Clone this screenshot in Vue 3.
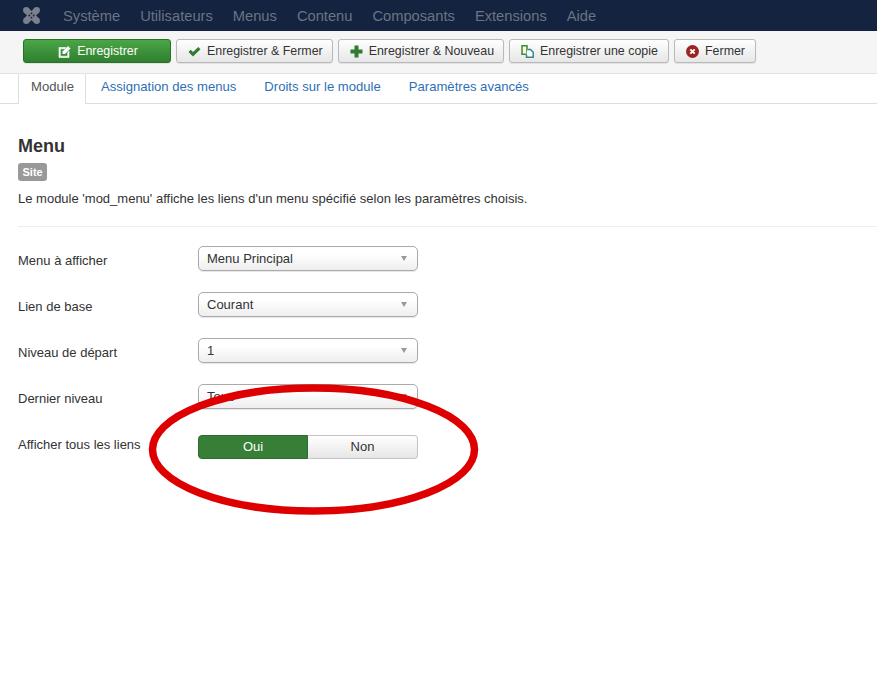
<script setup>
const menu = ['Système', 'Utilisateurs', 'Menus', 'Contenu', 'Composants', 'Extensions', 'Aide']
const tabs = ['Module', 'Assignation des menus', 'Droits sur le module', 'Paramètres avancés']
const fields = [
  { label: 'Menu à afficher', value: 'Menu Principal' },
  { label: 'Lien de base', value: 'Courant' },
  { label: 'Niveau de départ', value: '1' },
  { label: 'Dernier niveau', value: 'Tous' }
]
</script>

<template>
  <div class="page">
    <nav class="nav">
      <svg class="logo" viewBox="0 0 17 17" width="17" height="17">
        <path d="M3.500 3.500L13.500 13.500M13.500 3.500L3.500 13.500" stroke="#7a818d" stroke-width="6.500"/>
        <circle cx="3.300" cy="3.300" r="3.200" fill="#7a818d"/>
        <circle cx="13.700" cy="3.300" r="3.200" fill="#7a818d"/>
        <circle cx="3.300" cy="13.700" r="3.200" fill="#7a818d"/>
        <circle cx="13.700" cy="13.700" r="3.200" fill="#7a818d"/>
        <circle cx="8.500" cy="6.300" r=".9" fill="#132340"/>
        <circle cx="8.500" cy="10.700" r=".9" fill="#132340"/>
        <circle cx="6.300" cy="8.500" r=".9" fill="#132340"/>
        <circle cx="10.700" cy="8.500" r=".9" fill="#132340"/>
      </svg>
      <a v-for="m in menu" :key="m" class="nav-item">{{ m }}</a>
    </nav>

    <div class="toolbar">
      <button class="btn btn-save">
        <svg class="ic" viewBox="0 0 13 13"><path d="M1 2.500h7L6.800 3.800H2.300v7.400h7.400V7.500L11 6.200V12.500H1z" fill="#fff" stroke="#fff" stroke-width=".6"/><path d="M4.500 6.500L10 1l2.500 2.500L7 9H4.500z" fill="#fff"/></svg>
        Enregistrer
      </button>
      <button class="btn">
        <svg class="ic" viewBox="0 0 13 13"><path d="M.5 7l2.200-2.200 2.300 2.300L10.300 2l2.200 2.200L5 11.500z" fill="#2f7d32"/></svg>
        Enregistrer &amp; Fermer
      </button>
      <button class="btn">
        <svg class="ic" viewBox="0 0 13 13"><path d="M4.500.5h4v4h4v4h-4v4h-4v-4h-4v-4h4z" fill="#2f7d32"/></svg>
        Enregistrer &amp; Nouveau
      </button>
      <button class="btn btn-copy">
        <svg class="ic" viewBox="0 0 13 13"><path d="M1 .8h5v8.400H1z" fill="#fdf6d8" stroke="#3d8b3d" stroke-width="1.500"/><path d="M6.500 4.500h3l2.700 2.700v5H5.500V9.500" fill="#fff" stroke="#2a8a8a" stroke-width="1.500"/></svg>
        Enregistrer une copie
      </button>
      <button class="btn btn-close">
        <svg class="ic" viewBox="0 0 13 13"><circle cx="6.500" cy="6.500" r="6.500" fill="#9b2423"/><path d="M4.300 4.300l4.400 4.400M8.700 4.300l-4.400 4.400" stroke="#fff" stroke-width="1.900"/></svg>
        Fermer
      </button>
    </div>

    <div class="tabs">
      <a v-for="(t, i) in tabs" :key="t" class="tab" :class="{ active: i === 0 }">{{ t }}</a>
    </div>

    <main class="content">
      <h2 class="title">Menu</h2>
      <span class="badge">Site</span>
      <p class="desc">Le module 'mod_menu' affiche les liens d'un menu spécifié selon les paramètres choisis.</p>
      <hr class="sep" />

      <div class="form">
        <div v-for="f in fields" :key="f.label" class="row">
          <label class="label">{{ f.label }}</label>
          <div class="select">
            <span class="value">{{ f.value }}</span>
            <i class="caret"></i>
          </div>
        </div>
        <div class="row row-toggle">
          <label class="label">Afficher tous les liens</label>
          <div class="toggle">
            <span class="opt on">Oui</span>
            <span class="opt">Non</span>
          </div>
        </div>
      </div>
    </main>

    <svg class="ring" viewBox="0 0 877 682" width="877" height="682">
      <ellipse cx="313.500" cy="449.500" rx="161" ry="61.500" fill="none" stroke="#de0000" stroke-width="7.500"/>
    </svg>
  </div>
</template>

<style scoped>
.page {
  position: relative;
  width: 877px;
  height: 682px;
  overflow: hidden;
  background: #fff;
  font-family: "Liberation Sans", Arial, sans-serif;
  font-size: 13px;
  color: #333;
}
.nav {
  display: flex;
  align-items: center;
  height: 31px;
  background: #132340;
  padding-left: 23px;
}
.logo { margin-right: 23px; }
.nav-item {
  font-size: 14.700px;
  color: #6b7482;
  margin-right: 20px;
}
.toolbar {
  display: flex;
  gap: 5px;
  height: 43px;
  box-sizing: border-box;
  padding: 8px 0 0 23px;
  background: #f5f5f5;
  border-bottom: 1px solid #e2e2e2;
}
.btn {
  display: flex;
  align-items: center;
  gap: 6px;
  height: 24px;
  padding: 0 9px 0 11px;
  box-sizing: border-box;
  border: 1px solid #b9b9b9;
  border-radius: 3px;
  background: linear-gradient(#fff, #e6e6e6);
  font: 12.400px "Liberation Sans", Arial, sans-serif;
  color: #333;
  box-shadow: 0 1px 1px rgba(0, 0, 0, .08);
}
.btn-save {
  width: 148px;
  justify-content: center;
  background: linear-gradient(#4ba647, #2f7f2f);
  border-color: #2b6f2b;
  color: #fff;
}
.btn-copy { width: 160px; }
.btn-close { width: 82px; }
.ic { width: 13px; height: 13px; flex: none; }
.tabs {
  display: flex;
  height: 30px;
  box-sizing: border-box;
  padding-left: 18px;
  border-bottom: 1px solid #ddd;
  font-size: 13.100px;
}
.tab {
  padding: 5px 14px 0;
  line-height: 16px;
  color: #2f6fb5;
}
.active {
  height: 30px;
  box-sizing: border-box;
  padding: 5px 11px 0 12px;
  margin-right: 1px;
  color: #555;
  background: #fff;
  border: 1px solid #ddd;
  border-top: 0;
  border-bottom: 0;
}
.content { padding: 31px 0 0 18px; }
.title {
  margin: 0;
  font-size: 18px;
  line-height: 22px;
  color: #333;
}
.badge {
  display: inline-block;
  margin-top: 6px;
  padding: 0 4.500px;
  height: 18px;
  line-height: 18px;
  border-radius: 3px;
  background: #999;
  color: #fff;
  font-size: 11px;
  font-weight: bold;
}
.desc {
  margin: 9px 0 0;
  line-height: 18px;
  color: #333;
}
.sep {
  margin: 18px 0 0;
  border: 0;
  border-top: 1px solid #eee;
}
.form {
  display: flex;
  flex-direction: column;
  gap: 20px;
  padding-top: 18px;
}
.row {
  display: flex;
  align-items: center;
  height: 26px;
}
.label { width: 180px; padding-top: 4px; }
.select {
  display: flex;
  align-items: center;
  justify-content: space-between;
  width: 220px;
  height: 25px;
  box-sizing: border-box;
  padding: 0 10px 0 8px;
  border: 1px solid #aaa;
  border-radius: 5px;
  background: linear-gradient(#fff 30%, #eee);
  box-shadow: 0 1px 1px rgba(0, 0, 0, .1);
}
.value { padding-top: 1px; }
.caret {
  width: 0;
  height: 0;
  border: 3.500px solid transparent;
  border-top: 5px solid #999;
  border-bottom: 0;
}
.row-toggle { margin-top: 4px; }
.row-toggle .label { padding-top: 0; margin-bottom: 3px; }
.toggle {
  display: flex;
  width: 220px;
  height: 24px;
  margin-top: 1px;
}
.opt {
  flex: none;
  width: 50%;
  box-sizing: border-box;
  display: flex;
  align-items: center;
  justify-content: center;
  border: 1px solid #c4c4c4;
  border-left: 0;
  border-radius: 0 4px 4px 0;
  background: linear-gradient(#fff, #e6e6e6);
}
.opt.on {
  border: 1px solid #2f6a2f;
  border-radius: 4px 0 0 4px;
  background: #377f37;
  color: #fff;
}
.ring {
  position: absolute;
  left: 0;
  top: 0;
  pointer-events: none;
}
</style>
